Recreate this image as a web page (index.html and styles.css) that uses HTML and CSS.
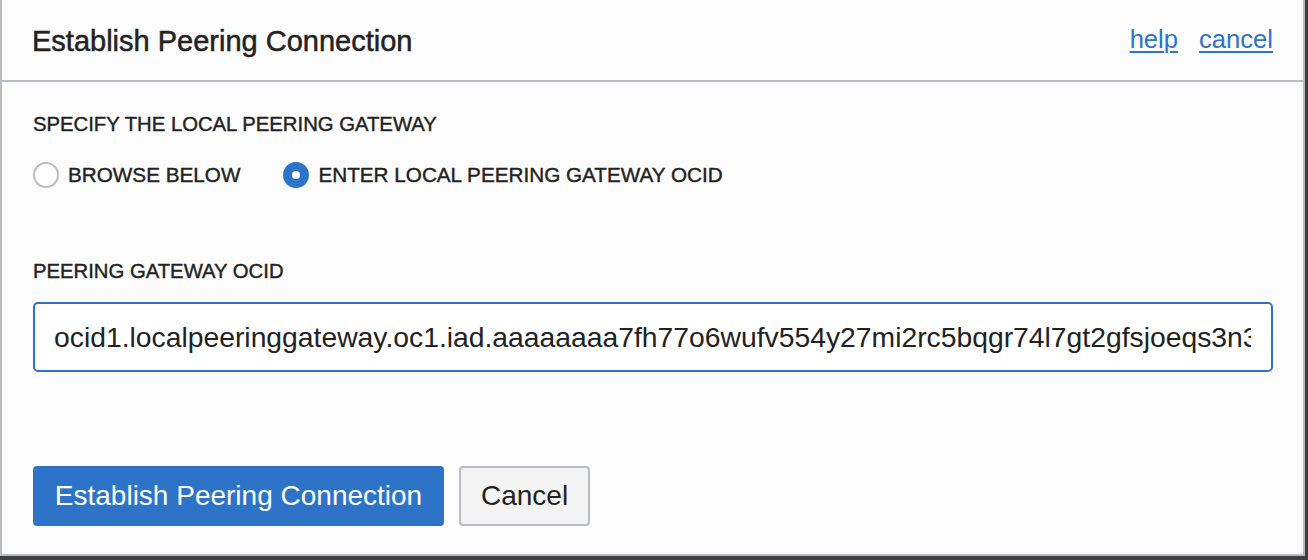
FILE: index.html
```html
<!DOCTYPE html>
<html>
<head>
<meta charset="utf-8">
<link rel="stylesheet" href="styles.css">
</head>
<body>
<div class="dialog">
  <div class="header">
    <h1 class="title">Establish Peering Connection</h1>
    <div class="links">
      <a href="#" class="link">help</a>
      <a href="#" class="link">cancel</a>
    </div>
  </div>
  <div class="content">
    <div class="label">SPECIFY THE LOCAL PEERING GATEWAY</div>
    <div class="radios">
      <label class="radio-opt"><input type="radio" name="mode" class="radio"><span class="radio-text">BROWSE BELOW</span></label>
      <label class="radio-opt"><input type="radio" name="mode" class="radio" checked><span class="radio-text">ENTER LOCAL PEERING GATEWAY OCID</span></label>
    </div>
    <div class="label label-ocid">PEERING GATEWAY OCID</div>
    <input type="text" class="text-input" value="ocid1.localpeeringgateway.oc1.iad.aaaaaaaa7fh77o6wufv554y27mi2rc5bqgr74l7gt2gfsjoeqs3n3q5kvxa">
    <div class="actions">
      <button class="btn btn-primary">Establish Peering Connection</button>
      <button class="btn btn-secondary">Cancel</button>
    </div>
  </div>
</div>
</body>
</html>
```

FILE: styles.css
```css
html, body {
  margin: 0;
  padding: 0;
}
body {
  background: #3f3f3f;
  width: 1308px;
  height: 560px;
  overflow: hidden;
  font-family: "Liberation Sans", Arial, sans-serif;
  color: #222222;
}
.dialog {
  box-sizing: border-box;
  width: 1305px;
  height: 556px;
  background: #fcfcfc;
  border-left: 2px solid #b9bcc1;
  border-right: 2px solid #b9bcc1;
  border-bottom: 2px solid #b9bcc1;
}
.header {
  box-sizing: border-box;
  height: 82px;
  border-bottom: 2px solid #b9bcc1;
  display: flex;
  align-items: center;
  justify-content: space-between;
  padding: 0 30px 0 30px;
}
.title {
  margin: 0;
  font-size: 29px;
  line-height: 29px;
  font-weight: normal;
  color: #222222;
  -webkit-text-stroke: 0.5px #222222;
  position: relative;
  top: 1px;
}
.links {
  display: flex;
  gap: 21px;
  position: relative;
  top: -1px;
}
.link {
  font-size: 25.6px;
  line-height: 28px;
  color: #2d74c8;
  text-decoration: underline;
  text-decoration-thickness: 1.5px;
  text-underline-offset: 3px;
}
.content {
  padding: 30px 30px 0 31px;
  display: flex;
  flex-direction: column;
}
.label {
  font-size: 20.3px;
  line-height: 24px;
  color: #222222;
  -webkit-text-stroke: 0.4px #222222;
}
.radios {
  display: flex;
  gap: 43px;
  margin-top: 25px;
  height: 28px;
  align-items: center;
}
.radio-opt {
  display: flex;
  align-items: center;
  gap: 9px;
}
.radio {
  appearance: none;
  -webkit-appearance: none;
  box-sizing: border-box;
  margin: 0;
  width: 26px;
  height: 26px;
  border-radius: 50%;
  border: 2px solid #b9bcc1;
  background: #ffffff;
  position: relative;
}
.radio:checked {
  border: none;
  background: #2d74c8;
}
.radio:checked::after {
  content: "";
  position: absolute;
  left: 9px;
  top: 9px;
  width: 8px;
  height: 8px;
  border-radius: 50%;
  background: #ffffff;
}
.radio-text {
  font-size: 20.7px;
  line-height: 28px;
  color: #222222;
  -webkit-text-stroke: 0.4px #222222;
}
.label-ocid {
  margin-top: 70px;
}
.text-input {
  box-sizing: border-box;
  margin-top: 19px;
  width: 1240px;
  height: 70px;
  border: 2px solid #2d74c8;
  border-radius: 5px;
  background: #ffffff;
  padding: 0 20px 0 19px;
  font-family: "Liberation Sans", Arial, sans-serif;
  font-size: 28.3px;
  color: #222222;
  outline: none;
}
.actions {
  display: flex;
  gap: 15px;
  margin-top: 94px;
}
.btn {
  box-sizing: border-box;
  height: 60px;
  font-family: "Liberation Sans", Arial, sans-serif;
  font-size: 28px;
  border-radius: 4px;
  cursor: pointer;
}
.btn-primary {
  width: 411px;
  background: #2d74c8;
  color: #ffffff;
  border: none;
  padding: 0 20px;
}
.btn-secondary {
  width: 131px;
  background: #f4f4f4;
  color: #222222;
  border: 2px solid #b9bcc1;
  padding: 0 20px;
}
```
